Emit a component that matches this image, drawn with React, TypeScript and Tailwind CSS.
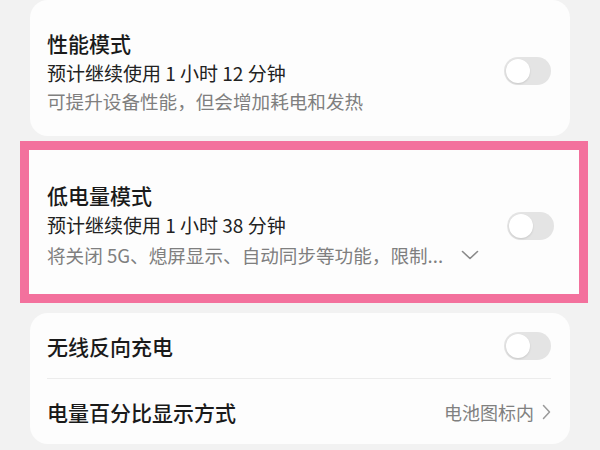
import React from "react";

const Toggle = () => (
  <div className="relative h-[28px] w-[47px] shrink-0 rounded-full bg-[#e4e4e4]">
    <div className="absolute left-[2px] top-[2px] h-[24px] w-[24px] rounded-full bg-white shadow-[0_1px_2px_rgba(0,0,0,0.12)]" />
  </div>
);

export default function App() {
  return (
    <div
      className="flex h-[450px] w-[600px] flex-col overflow-hidden bg-[#f2f2f2]"
      style={{ fontFamily: '"Noto Sans CJK SC", "Noto Sans", sans-serif' }}
    >
      {/* Card 1 */}
      <div className="mx-[30px] flex h-[136px] items-center rounded-[18px] bg-[#fdfdfd] pl-[17px] pr-[19px]">
        <div className="flex flex-1 flex-col pt-[8px]">
          <div className="text-[21px] font-medium leading-[29px] text-[#1a1a1a]">性能模式</div>
          <div className="text-[19px] leading-[29px] text-[#222]">预计继续使用 1 小时 12 分钟</div>
          <div className="text-[18.6px] leading-[28px] text-[#7f7f7f]">可提升设备性能，但会增加耗电和发热</div>
        </div>
        <div className="self-start pt-[57px]">
          <Toggle />
        </div>
      </div>

      {/* Highlighted card */}
      <div className="ml-[20px] mr-[12px] mt-[5px] h-[162px] border-[9px] border-[#f3719d] bg-[#fdfdfd]">
        <div className="flex h-full items-center pl-[18px] pr-[25px]">
          <div className="flex flex-1 flex-col pt-[6px]">
            <div className="text-[21px] font-medium leading-[30px] text-[#1a1a1a]">低电量模式</div>
            <div className="text-[19px] leading-[30px] text-[#222]">预计继续使用 1 小时 38 分钟</div>
            <div className="flex items-center text-[18.6px] leading-[30px] text-[#7f7f7f]">
              <span>将关闭 5G、熄屏显示、自动同步等功能，限制...</span>
              <svg className="ml-[18px]" width="18" height="10" viewBox="0 0 18 10" fill="none">
                <path d="M1.5 1.5 L9 8.5 L16.5 1.5" stroke="#8a8a8a" strokeWidth="1.6" strokeLinecap="round" strokeLinejoin="round" />
              </svg>
            </div>
          </div>
          <div className="self-start pt-[62px]">
            <Toggle />
          </div>
        </div>
      </div>

      {/* Card 3 */}
      <div className="mx-[30px] mt-[10px] flex h-[131px] flex-col rounded-[18px] bg-[#fdfdfd] pl-[17px] pr-[19px]">
        <div className="flex h-[65px] items-center justify-between">
          <div className="text-[21px] font-medium leading-[28px] text-[#1a1a1a]">无线反向充电</div>
          <Toggle />
        </div>
        <div className="h-px bg-[#ececec]" />
        <div className="flex h-[65px] items-center justify-between">
          <div className="text-[21px] font-medium leading-[28px] text-[#1a1a1a]">电量百分比显示方式</div>
          <div className="flex items-center gap-[8px]">
            <span className="text-[18px] leading-[28px] text-[#808080]">电池图标内</span>
            <svg width="9" height="16" viewBox="0 0 9 16" fill="none">
              <path d="M1.5 1.5 L7.5 8 L1.5 14.5" stroke="#9a9a9a" strokeWidth="1.5" strokeLinecap="round" strokeLinejoin="round" />
            </svg>
          </div>
        </div>
      </div>
    </div>
  );
}
